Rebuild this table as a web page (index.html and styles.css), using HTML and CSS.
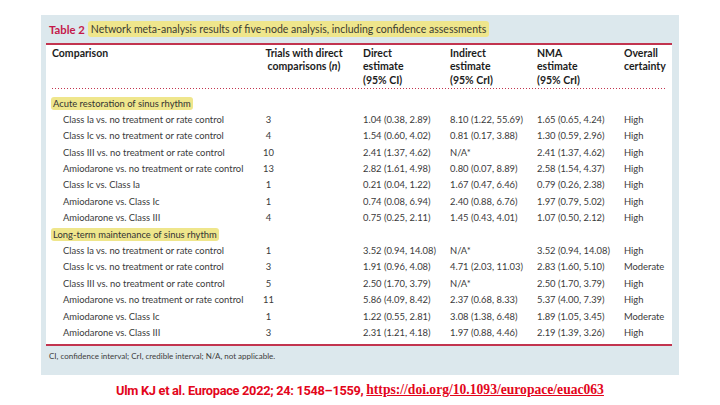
FILE: index.html
```html
<!DOCTYPE html>
<html>
<head>
<meta charset="utf-8">
<link rel="stylesheet" href="styles.css">
</head>
<body>
<div class="slide">
  <div class="panel">
    <div class="title"><span class="tnum">Table 2</span><span class="hl thl">Network meta-analysis results of five-node analysis, including confidence assessments</span></div>
    <div class="tbox">
      <div class="grid head">
        <div class="c1">Comparison</div>
        <div class="c2">Trials with direct<br>comparisons (<i>n</i>)</div>
        <div class="cv">Direct<br>estimate<br>(95% CI)</div>
        <div class="cv">Indirect<br>estimate<br>(95% CrI)</div>
        <div class="cv">NMA<br>estimate<br>(95% CrI)</div>
        <div class="cv">Overall<br>certainty</div>
      </div>
      <div class="tbody">
        <div class="section"><span class="hl">Acute restoration of sinus rhythm</span></div>
        <div class="grid row"><div class="c1">Class Ia vs. no treatment or rate control</div><div class="n">3</div><div class="cv">1.04 (0.38, 2.89)</div><div class="cv">8.10 (1.22, 55.69)</div><div class="cv">1.65 (0.65, 4.24)</div><div class="cv">High</div></div>
        <div class="grid row"><div class="c1">Class Ic vs. no treatment or rate control</div><div class="n">4</div><div class="cv">1.54 (0.60, 4.02)</div><div class="cv">0.81 (0.17, 3.88)</div><div class="cv">1.30 (0.59, 2.96)</div><div class="cv">High</div></div>
        <div class="grid row"><div class="c1">Class III vs. no treatment or rate control</div><div class="n">10</div><div class="cv">2.41 (1.37, 4.62)</div><div class="cv">N/A*</div><div class="cv">2.41 (1.37, 4.62)</div><div class="cv">High</div></div>
        <div class="grid row"><div class="c1">Amiodarone vs. no treatment or rate control</div><div class="n">13</div><div class="cv">2.82 (1.61, 4.98)</div><div class="cv">0.80 (0.07, 8.89)</div><div class="cv">2.58 (1.54, 4.37)</div><div class="cv">High</div></div>
        <div class="grid row"><div class="c1">Class Ic vs. Class Ia</div><div class="n">1</div><div class="cv">0.21 (0.04, 1.22)</div><div class="cv">1.67 (0.47, 6.46)</div><div class="cv">0.79 (0.26, 2.38)</div><div class="cv">High</div></div>
        <div class="grid row"><div class="c1">Amiodarone vs. Class Ic</div><div class="n">1</div><div class="cv">0.74 (0.08, 6.94)</div><div class="cv">2.40 (0.88, 6.76)</div><div class="cv">1.97 (0.79, 5.02)</div><div class="cv">High</div></div>
        <div class="grid row"><div class="c1">Amiodarone vs. Class III</div><div class="n">4</div><div class="cv">0.75 (0.25, 2.11)</div><div class="cv">1.45 (0.43, 4.01)</div><div class="cv">1.07 (0.50, 2.12)</div><div class="cv">High</div></div>
        <div class="section"><span class="hl">Long-term maintenance of sinus rhythm</span></div>
        <div class="grid row"><div class="c1">Class Ia vs. no treatment or rate control</div><div class="n">1</div><div class="cv">3.52 (0.94, 14.08)</div><div class="cv">N/A*</div><div class="cv">3.52 (0.94, 14.08)</div><div class="cv">High</div></div>
        <div class="grid row"><div class="c1">Class Ic vs. no treatment or rate control</div><div class="n">3</div><div class="cv">1.91 (0.96, 4.08)</div><div class="cv">4.71 (2.03, 11.03)</div><div class="cv">2.83 (1.60, 5.10)</div><div class="cv">Moderate</div></div>
        <div class="grid row"><div class="c1">Class III vs. no treatment or rate control</div><div class="n">5</div><div class="cv">2.50 (1.70, 3.79)</div><div class="cv">N/A*</div><div class="cv">2.50 (1.70, 3.79)</div><div class="cv">High</div></div>
        <div class="grid row"><div class="c1">Amiodarone vs. no treatment or rate control</div><div class="n">11</div><div class="cv">5.86 (4.09, 8.42)</div><div class="cv">2.37 (0.68, 8.33)</div><div class="cv">5.37 (4.00, 7.39)</div><div class="cv">High</div></div>
        <div class="grid row"><div class="c1">Amiodarone vs. Class Ic</div><div class="n">1</div><div class="cv">1.22 (0.55, 2.81)</div><div class="cv">3.08 (1.38, 6.48)</div><div class="cv">1.89 (1.05, 3.45)</div><div class="cv">Moderate</div></div>
        <div class="grid row"><div class="c1">Amiodarone vs. Class III</div><div class="n">3</div><div class="cv">2.31 (1.21, 4.18)</div><div class="cv">1.97 (0.88, 4.46)</div><div class="cv">2.19 (1.39, 3.26)</div><div class="cv">High</div></div>
      </div>
    </div>
    <div class="foot">CI, confidence interval; CrI, credible interval; N/A, not applicable.</div>
  </div>
  <div class="cite"><span class="cite-a">Ulm KJ et al. Europace 2022; 24: 1548–1559, </span><a class="cite-b" href="#">https://doi.org/10.1093/europace/euac063</a></div>
</div>
</body>
</html>
```

FILE: styles.css
```css
html, body {
  margin: 0;
  padding: 0;
  background: #ffffff;
}
.slide {
  width: 720px;
  height: 405px;
  padding-top: 15px;
  box-sizing: border-box;
  font-family: Lato, "Open Sans", sans-serif;
}
.panel {
  margin-left: 41px;
  width: 638px;
  height: 360px;
  box-sizing: border-box;
  background: #dce8ed;
  padding-left: 5px;
  display: flex;
  flex-direction: column;
}
.title {
  height: 28px;
  padding-left: 3px;
  display: flex;
  align-items: center;
  font-size: 10.5px;
  color: #3b3b30;
}
.tnum {
  color: #c4184a;
  font-weight: 700;
  font-size: 11.3px;
  margin-right: 3px;
}
.hl {
  background: #efe68c;
  border-radius: 3px;
  padding: 1px 2px;
}
.thl {
  padding: 2px 3px;
}
.tbox {
  width: 626px;
  background: #ffffff;
  border-top: 2px solid #c2344f;
  border-bottom: 2px solid #c2344f;
  box-sizing: border-box;
}
.grid {
  display: grid;
  grid-template-columns: 204px 108px 87px 87px 87px 53px;
}
.head {
  font-weight: 700;
  font-size: 10.5px;
  line-height: 13.5px;
  color: #1c1c1c;
  padding-top: 1.5px;
  padding-bottom: 2px;
  margin: 0 5px 0 6px;
  grid-template-columns: 198px 108px 87px 87px 87px 47px;
  background-image: linear-gradient(to right, #c2344f 50%, transparent 50%);
  background-size: 3px 1px;
  background-repeat: repeat-x;
  background-position: bottom left;
}
.head .c2 {
  text-align: center;
}
.head .cv {
  padding-left: 5px;
}
.tbody {
  padding-top: 6.5px;
  padding-bottom: 2.5px;
  font-size: 9.4px;
  color: #3a3a3a;
}
.section {
  height: 16.4px;
  line-height: 16.4px;
  padding-left: 5px;
  color: #333333;
}
.row {
  height: 16.4px;
  line-height: 16.4px;
}
.row .c1 {
  padding-left: 17px;
  white-space: nowrap;
}
.row .n {
  width: 37px;
  text-align: center;
}
.row .cv {
  padding-left: 5px;
  white-space: nowrap;
}
.foot {
  padding: 5px 0 0 3px;
  font-size: 8px;
  color: #3c3c3c;
}
.cite {
  height: 30px;
  display: flex;
  align-items: center;
  justify-content: center;
  color: #e3061b;
  font-weight: 700;
}
.cite-a {
  font-family: Roboto, "Noto Sans", sans-serif;
  font-size: 12.8px;
  letter-spacing: -0.3px;
  white-space: pre;
}
.cite-b {
  font-family: "Liberation Serif", serif;
  font-size: 13.6px;
  color: #e3061b;
  text-decoration: underline;
}
```
